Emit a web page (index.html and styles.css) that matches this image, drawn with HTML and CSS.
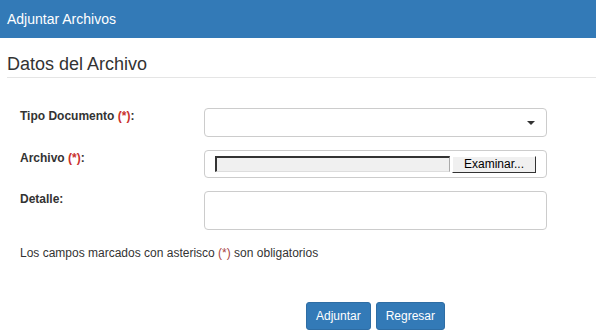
FILE: index.html
```html
<!DOCTYPE html>
<html lang="es">
<head>
  <meta charset="UTF-8" />
  <title>Adjuntar Archivos</title>
  <link rel="stylesheet" href="styles.css">
</head>
<body>
  <div class="panel-heading">Adjuntar Archivos</div>

  <div class="panel-body">
    <h2 class="legend">Datos del Archivo</h2>

    <form class="form">
      <div class="row">
        <label class="label">Tipo Documento <span class="req">(*)</span>:</label>
        <div class="control select">
          <span class="caret"></span>
        </div>
      </div>

      <div class="row">
        <label class="label">Archivo <span class="req">(*)</span>:</label>
        <div class="control file">
          <span class="file-field"></span>
          <span class="file-btn">Examinar...</span>
        </div>
      </div>

      <div class="row">
        <label class="label">Detalle:</label>
        <div class="control textarea"></div>
      </div>

      <p class="note">Los campos marcados con asterisco <span class="req-note">(*)</span> son obligatorios</p>

      <div class="row actions">
        <span class="spacer"></span>
        <div class="buttons">
          <button type="button" class="btn">Adjuntar</button>
          <button type="button" class="btn">Regresar</button>
        </div>
      </div>
    </form>
  </div>
</body>
</html>
```

FILE: styles.css
```css
* {
  margin: 0;
  padding: 0;
  box-sizing: border-box;
}

body {
  font-family: "Liberation Sans", Arial, sans-serif;
  font-size: 12px;
  color: #333;
  background: #fff;
}

.panel-heading {
  height: 38px;
  background-color: #337ab7;
  color: #fff;
  font-size: 14px;
  line-height: 38px;
  padding-left: 7px;
}

.panel-body {
  padding: 14px 0 0 7px;
}

.legend {
  font-size: 18px;
  font-weight: normal;
  line-height: 24px;
  padding-bottom: 1px;
  border-bottom: 1px solid #e5e5e5;
}

.form {
  padding: 30px 49px 0 13px;
}

.row {
  display: flex;
  margin-bottom: 13px;
}

.label {
  width: 184px;
  font-weight: bold;
  padding-top: 1px;
}

.req {
  color: #c9302c;
}

.req-note {
  color: #a94442;
}

.control {
  flex: 1;
  border: 1px solid #ccc;
  border-radius: 4px;
  height: 29px;
}

.select {
  display: flex;
  align-items: center;
  justify-content: flex-end;
  padding-right: 11px;
}

.caret {
  width: 0;
  height: 0;
  border-left: 4px solid transparent;
  border-right: 4px solid transparent;
  border-top: 4px solid #333;
}

.file {
  height: 28px;
  display: flex;
  align-items: center;
  padding-left: 10px;
}

.file-field {
  width: 235px;
  height: 16px;
  background: #f0f0f0;
  border-top: 2px solid #333;
  border-left: 2px solid #333;
  border-right: 1px solid #aaa;
  border-bottom: 1px solid #ddd;
}

.file-btn {
  margin-left: 2px;
  width: 84px;
  height: 17px;
  line-height: 15px;
  text-align: center;
  font-size: 12px;
  color: #000;
  background: #f0f0f0;
  border: 1px solid #fff;
  border-right-color: #333;
  border-bottom-color: #333;
}

.textarea {
  height: 39px;
}

.note {
  padding-top: 3px;
  margin-bottom: 42px;
}

.actions .spacer {
  width: 184px;
}

.buttons {
  flex: 1;
  display: flex;
  justify-content: center;
  gap: 5px;
}

.btn {
  font-family: "Liberation Sans", Arial, sans-serif;
  font-size: 12px;
  color: #fff;
  background-color: #337ab7;
  border: 1px solid #2e6da4;
  border-radius: 3px;
  height: 28px;
  padding: 0 9px;
  cursor: pointer;
}
```
